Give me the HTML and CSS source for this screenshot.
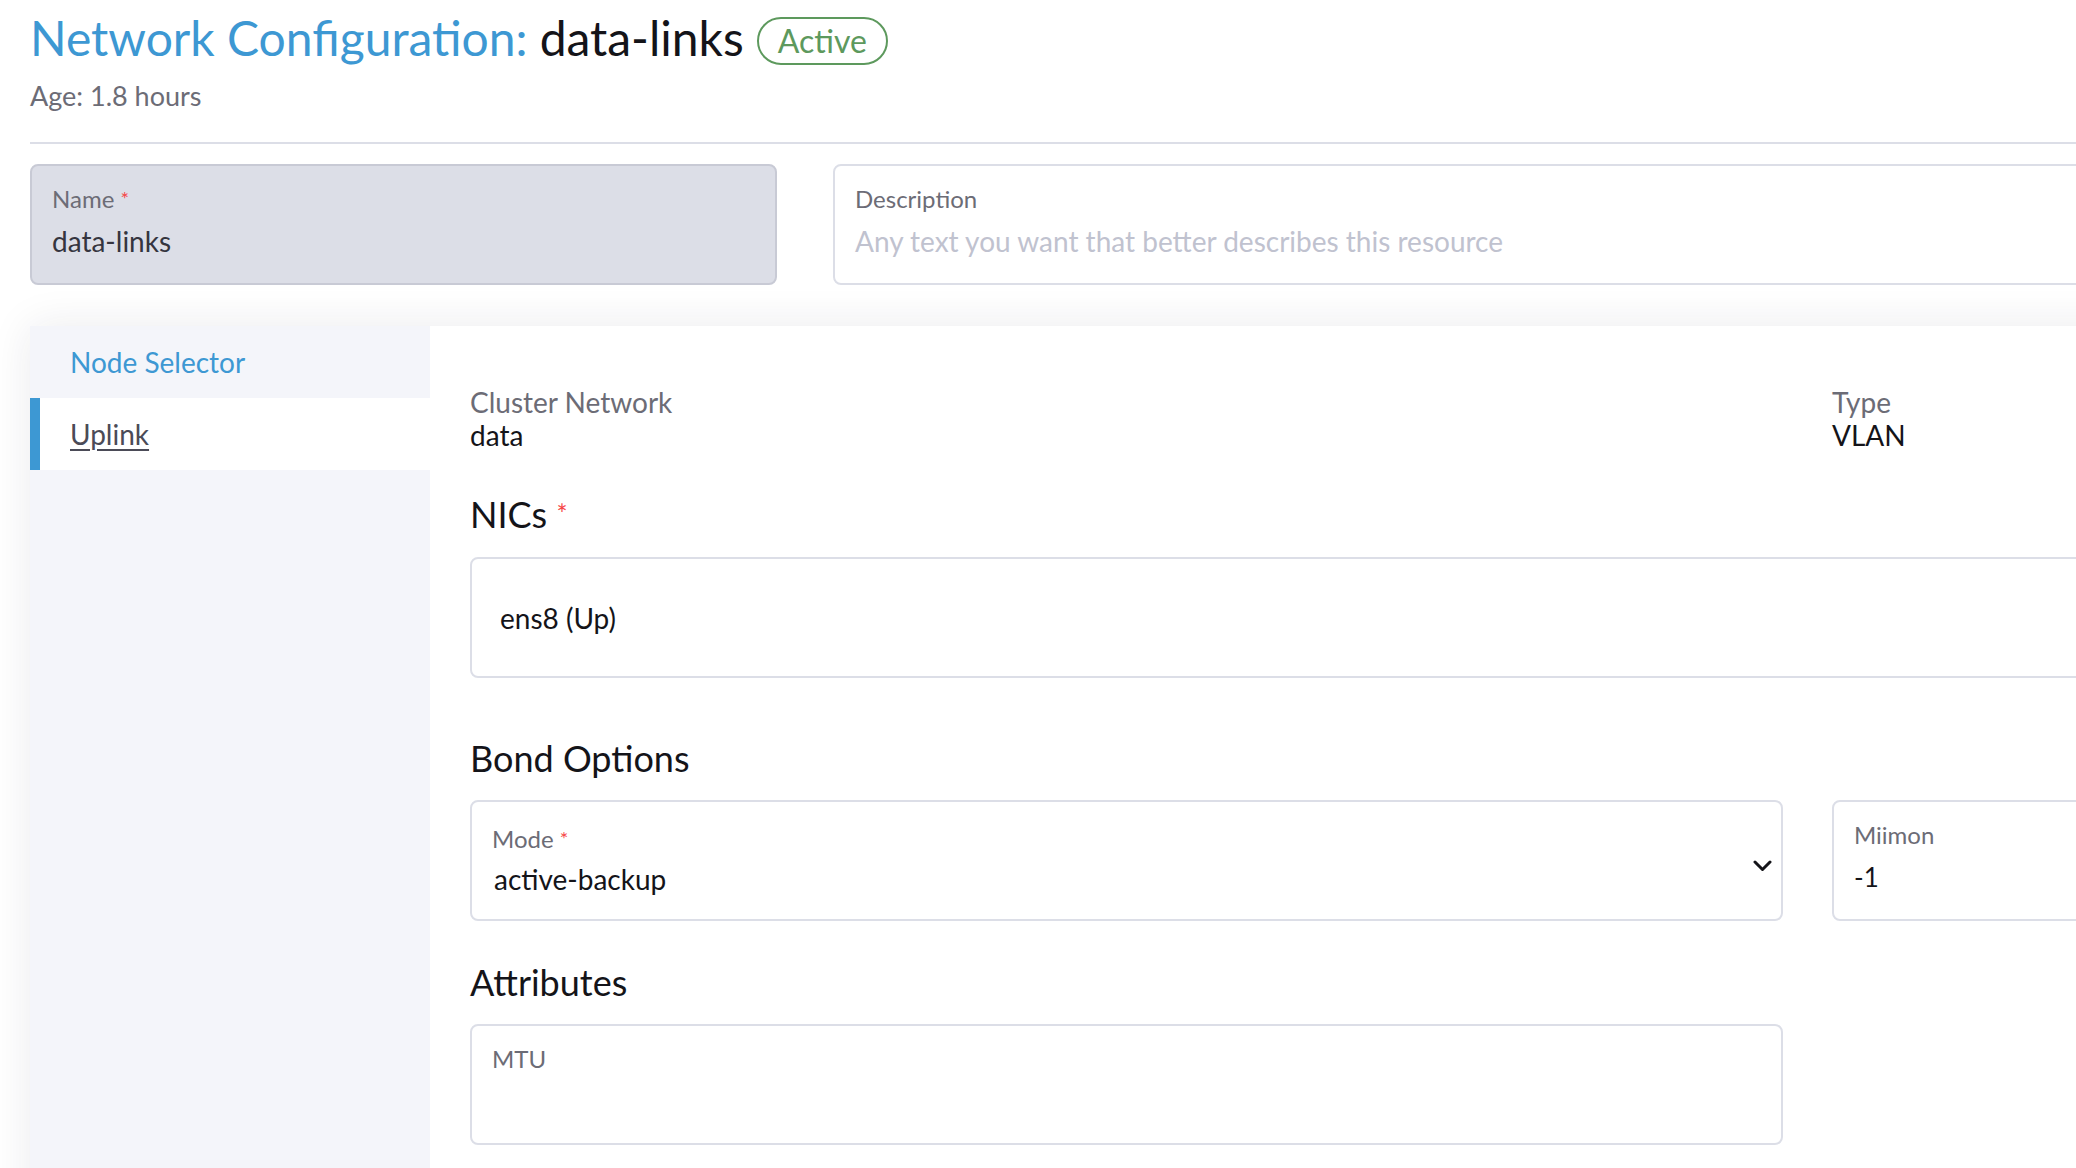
FILE: index.html
```html
<!DOCTYPE html>
<html lang="en">
<head>
<meta charset="utf-8">
<title>Network Configuration: data-links</title>
<link rel="stylesheet" href="styles.css">
</head>
<body>
<div class="page">
  <header class="masthead">
    <h1 class="title"><span class="title-type">Network Configuration:</span><span class="title-name">data-links</span><span class="badge">Active</span></h1>
    <div class="age">Age: 1.8 hours</div>
  </header>
  <div class="divider"></div>
  <div class="name-row">
    <div class="field field-disabled name-field">
      <div class="field-label">Name <span class="req">*</span></div>
      <div class="field-value">data-links</div>
    </div>
    <div class="field desc-field">
      <div class="field-label">Description</div>
      <div class="field-value placeholder">Any text you want that better describes this resource</div>
    </div>
  </div>
  <div class="tabbed">
    <nav class="tabs">
      <a class="tab">Node Selector</a>
      <a class="tab active">Uplink</a>
    </nav>
    <section class="tab-body">
      <div class="grid2">
        <div class="lv"><div class="lv-label">Cluster Network</div><div class="lv-value">data</div></div>
        <div class="lv"><div class="lv-label">Type</div><div class="lv-value">VLAN</div></div>
      </div>
      <h3 class="section-title">NICs <span class="req req-lg">*</span></h3>
      <div class="nic-box">ens8 (Up)</div>
      <h3 class="section-title section-gap">Bond Options</h3>
      <div class="grid2 under-title">
        <div class="field select-field">
          <div class="select-text">
            <div class="field-label">Mode <span class="req">*</span></div>
            <div class="field-value select-value">active-backup</div>
          </div>
          <svg class="chevron" width="19" height="12" viewBox="0 0 19 12"><polyline points="2,2 9.5,9.5 17,2" fill="none" stroke="#141419" stroke-width="3" stroke-linecap="round" stroke-linejoin="round"/></svg>
        </div>
        <div class="field">
          <div class="field-label">Miimon</div>
          <div class="field-value num-value">-1</div>
        </div>
      </div>
      <h3 class="section-title attr-title">Attributes</h3>
      <div class="grid2 under-title">
        <div class="field">
          <div class="field-label">MTU</div>
          <div class="field-value"></div>
        </div>
      </div>
    </section>
  </div>
</div>
</body>
</html>
```

FILE: styles.css
```css
html, body {
  margin: 0;
  padding: 0;
  overflow: hidden;
  background: #ffffff;
}

body {
  font-family: Lato, "Noto Sans", sans-serif;
  color: #141419;
  width: 2076px;
  height: 1168px;
}

.page {
  width: 3300px;
  padding-left: 30px;
  box-sizing: border-box;
}

/* Header */
.title {
  margin: 9px 0 0;
  display: flex;
  align-items: center;
  font-size: 48px;
  line-height: 58px;
  font-weight: 400;
}

.title-type {
  color: #3d98d3;
}

.title-name {
  color: #141419;
  margin-left: 12px;
}

.badge {
  margin-left: 13px;
  margin-top: 6px;
  height: 48px;
  box-sizing: border-box;
  border: 2px solid #5d995d;
  border-radius: 24px;
  padding: 0 19px;
  font-size: 32px;
  line-height: 44px;
  color: #5d995d;
}

.age {
  margin-top: 12px;
  font-size: 27px;
  line-height: 34px;
  color: #6c6c76;
}

.divider {
  margin-top: 29px;
  height: 2px;
  background: #dcdee7;
}

/* Name / description */
.name-row {
  margin-top: 20px;
  display: flex;
  gap: 56px;
}

.field {
  box-sizing: border-box;
  height: 121px;
  border: 2px solid #dcdee7;
  border-radius: 8px;
  padding: 18px 20px 0;
  background: #ffffff;
}

.name-field {
  width: 747px;
  flex: none;
}

.desc-field {
  width: 1600px;
  flex: none;
}

.field-disabled {
  background: #dcdee7;
  border-color: #c8cad5;
}

.field-label {
  font-size: 24px;
  line-height: 29px;
  color: #6c6c76;
  white-space: nowrap;
}

.field-value {
  margin-top: 11px;
  font-size: 28px;
  line-height: 34px;
  min-height: 34px;
  color: #141419;
  white-space: nowrap;
}

.field-disabled .field-value {
  color: #35353f;
}

.placeholder {
  color: #c0c2cf;
}

.req {
  color: #f64747;
  font-size: 20px;
  vertical-align: top;
}

.req-lg {
  font-size: 26px;
  vertical-align: text-top;
}

/* Tabbed area */
.tabbed {
  margin-top: 41px;
  display: flex;
  min-height: 900px;
  box-shadow: 0 0 40px rgba(30, 30, 60, 0.09);
}

.tabs {
  width: 400px;
  flex: none;
  background: #f4f5fa;
  display: flex;
  flex-direction: column;
}

.tab {
  height: 72px;
  line-height: 72px;
  font-size: 28px;
  padding-left: 30px;
  border-left: 10px solid transparent;
  color: #3d98d3;
}

.tab.active {
  background: #ffffff;
  border-left-color: #3d98d3;
  color: #4b4b57;
  text-decoration: underline;
  text-underline-offset: 4px;
  text-decoration-thickness: 2px;
}

.tab-body {
  flex: 1;
  background: #ffffff;
  padding: 59px 40px 0;
}

.grid2 {
  display: grid;
  grid-template-columns: 1313px 1313px;
  column-gap: 49px;
}

.lv-label {
  font-size: 28px;
  line-height: 34px;
  color: #6c6c76;
}

.lv-value {
  font-size: 28px;
  line-height: 32px;
  color: #141419;
}

.section-title {
  margin: 41px 0 0;
  font-size: 36px;
  line-height: 44px;
  font-weight: 400;
  color: #141419;
}

.section-gap {
  margin-top: 58px;
}

.attr-title {
  margin-top: 39px;
}

.nic-box {
  margin-top: 21px;
  box-sizing: border-box;
  height: 121px;
  border: 2px solid #dcdee7;
  border-radius: 8px;
  padding-left: 28px;
  display: flex;
  align-items: center;
  font-size: 28px;
  line-height: 34px;
  color: #141419;
}

.under-title {
  margin-top: 20px;
}

.select-field {
  display: grid;
  grid-template-columns: 1fr auto;
  padding: 22px 9px 0 20px;
}

.select-value {
  margin-top: 9px;
  padding-left: 2px;
}

.chevron {
  align-self: start;
  margin-top: 36px;
}

.num-value {
  font-size: 26px;
}
```
